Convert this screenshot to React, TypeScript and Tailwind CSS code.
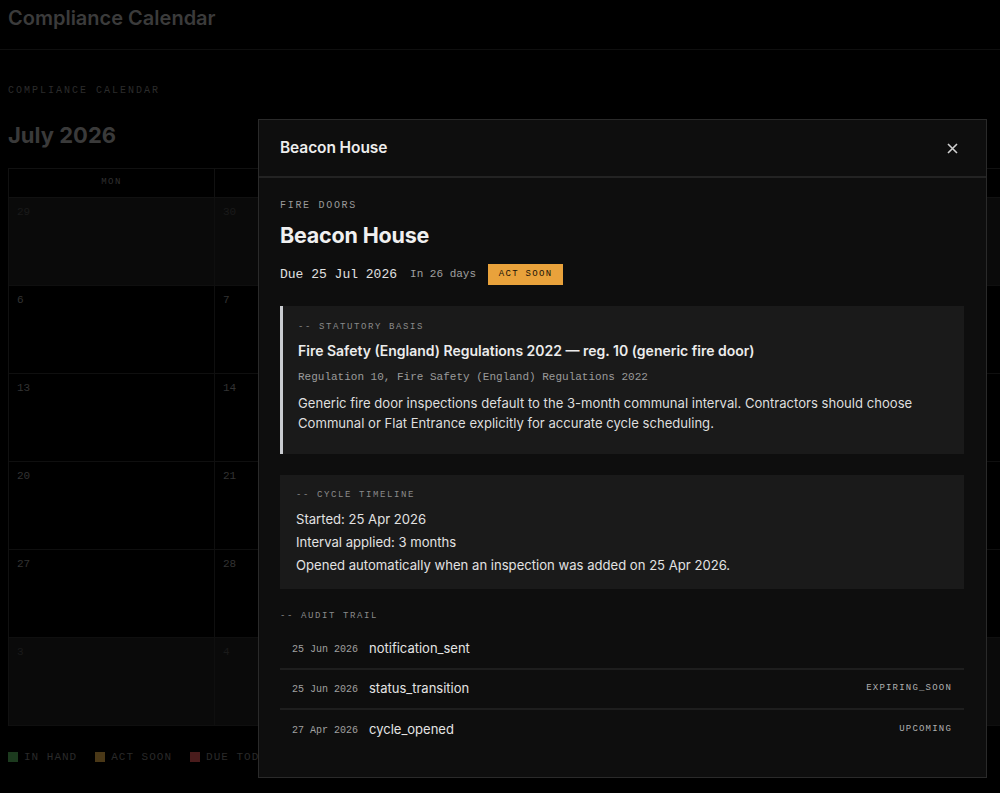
import React from "react";

const mono = "font-['Liberation_Mono','DejaVu_Sans_Mono',monospace]";
const sans = "font-['Inter','Noto_Sans',sans-serif]";

const weeks: { n: number; other: boolean }[][] = [
  [29, 30, 1, 2, 3, 4, 5].map((n, i) => ({ n, other: i < 2 })),
  [6, 7, 8, 9, 10, 11, 12].map((n) => ({ n, other: false })),
  [13, 14, 15, 16, 17, 18, 19].map((n) => ({ n, other: false })),
  [20, 21, 22, 23, 24, 25, 26].map((n) => ({ n, other: false })),
  [27, 28, 29, 30, 31, 1, 2].map((n, i) => ({ n, other: i > 4 })),
  [3, 4, 5, 6, 7, 8, 9].map((n) => ({ n, other: true })),
];

const days = ["MON", "TUE", "WED", "THU", "FRI", "SAT", "SUN"];

function Background() {
  return (
    <div className="min-h-[793px] w-[1000px] overflow-hidden bg-black">
      <div className="h-[50px] border-b border-[#0f0f0f] px-2 flex items-center">
        <div className={`${sans} text-[20px] font-semibold text-[#3b3b3b] -mt-[14px]`}>
          Compliance Calendar
        </div>
      </div>
      <div className="px-2 pt-[33px]">
        <div className={`${mono} text-[10px] tracking-[2px] text-[#2c2c2c]`}>COMPLIANCE CALENDAR</div>
        <div className={`${sans} mt-[22px] text-[22px] font-bold text-[#3a3a3a] leading-[30px]`}>July 2026</div>
        <div className="mt-[18px] w-[1442px] border-t border-l border-[#111111]">
          <div className="grid grid-cols-[repeat(7,206px)]">
            {days.map((d) => (
              <div
                key={d}
                className={`${mono} h-[29px] flex items-center justify-center border-r border-b border-[#111111] text-[9px] tracking-[1.5px] text-[#303030]`}
              >
                {d}
              </div>
            ))}
          </div>
          {weeks.map((w, wi) => (
            <div
              key={wi}
              className={`grid grid-cols-[repeat(7,206px)] ${wi === 0 || wi === 5 ? "bg-[#0a0a0a]" : "bg-black"}`}
            >
              {w.map((c, ci) => (
                <div
                  key={ci}
                  className={`${mono} h-[88px] border-r border-b border-[#0f0f0f] px-2 pt-[6px] text-[11px] ${c.other ? "text-[#1a1a1a]" : "text-[#333333]"}`}
                >
                  {c.n}
                </div>
              ))}
            </div>
          ))}
        </div>
        <div className={`${mono} mt-[23px] flex items-center gap-[18px] text-[11px] tracking-[1px] text-[#2a2a2a]`}>
          <div className="flex items-center gap-[6px]">
            <span className="h-[10px] w-[10px] bg-[#1c3a1e]" />
            IN HAND
          </div>
          <div className="flex items-center gap-[6px]">
            <span className="h-[10px] w-[10px] bg-[#4a3817]" />
            ACT SOON
          </div>
          <div className="flex items-center gap-[6px]">
            <span className="h-[10px] w-[10px] bg-[#4a1c1c]" />
            DUE TODAY
          </div>
          <div className="flex items-center gap-[6px]">
            <span className="h-[10px] w-[10px] bg-[#3a1010]" />
            OVERDUE
          </div>
        </div>
      </div>
    </div>
  );
}

function Modal() {
  const audit = [
    { d: "25 Jun 2026", e: "notification_sent", t: "" },
    { d: "25 Jun 2026", e: "status_transition", t: "EXPIRING_SOON" },
    { d: "27 Apr 2026", e: "cycle_opened", t: "UPCOMING" },
  ];
  return (
    <div className="absolute left-[258px] top-[119px] w-[729px] h-[659px] border border-[#2a2a2a] bg-[#0e0e0e] flex flex-col">
      <div className="h-[58px] shrink-0 border-b-2 border-[#232323] flex items-center justify-between pl-[21px] pr-[28px]">
        <div className={`${sans} text-[15.5px] font-semibold text-[#ededed] tracking-[-0.1px]`}>Beacon House</div>
        <svg width="11" height="11" viewBox="0 0 11 11" className="text-[#d0d0d0]">
          <path d="M1 1 L10 10 M10 1 L1 10" stroke="currentColor" strokeWidth="1.6" />
        </svg>
      </div>
      <div className="px-[21px] pt-[22px] pr-[22px]">
        <div className={`${mono} text-[10px] tracking-[1.7px] text-[#9a9a9a] leading-[12px]`}>FIRE DOORS</div>
        <div className={`${sans} mt-[10px] text-[21.5px] font-bold text-[#f0f0f0] leading-[26px] tracking-[-0.2px]`}>
          Beacon House
        </div>
        <div className="mt-[16px] flex items-center">
          <span className={`${mono} text-[13px] text-[#e0e0e0]`}>Due 25 Jul 2026</span>
          <span className={`${mono} ml-[13px] text-[11px] text-[#a0a0a0]`}>In 26 days</span>
          <span
            className={`${mono} ml-[12px] h-[21px] w-[75px] flex items-center justify-center bg-[#e9a23b] text-[9px] tracking-[1.3px] text-[#1a1208]`}
          >
            ACT SOON
          </span>
        </div>

        <div className="mt-[21px] bg-[#1a1a1a] border-l-[3px] border-[#c9ccd0] pl-[15px] pr-4 pt-[15px] pb-[21px]">
          <div className={`${mono} text-[9px] tracking-[1.6px] text-[#8a8a8a] leading-[12px]`}>-- STATUTORY BASIS</div>
          <div className={`${sans} mt-[9px] text-[14px] font-semibold text-[#ececec] leading-[18px]`}>
            Fire Safety (England) Regulations 2022 — reg. 10 (generic fire door)
          </div>
          <div className={`${mono} mt-[10px] text-[11px] text-[#9a9a9a] leading-[14px]`}>
            Regulation 10, Fire Safety (England) Regulations 2022
          </div>
          <div className={`${sans} mt-[9px] text-[13.1px] text-[#dedede] leading-[20px]`}>
            Generic fire door inspections default to the 3-month communal interval. Contractors should choose
            Communal or Flat Entrance explicitly for accurate cycle scheduling.
          </div>
        </div>

        <div className="mt-[21px] bg-[#1a1a1a] px-[16px] pt-[14px] pb-[12px]">
          <div className={`${mono} text-[9px] tracking-[1.6px] text-[#8a8a8a] leading-[12px]`}>-- CYCLE TIMELINE</div>
          <div className={`${sans} mt-[7px] text-[13.1px] text-[#e2e2e2] leading-[23px]`}>
            <div>Started: 25 Apr 2026</div>
            <div>Interval applied: 3 months</div>
            <div>Opened automatically when an inspection was added on 25 Apr 2026.</div>
          </div>
        </div>

        <div className={`${mono} mt-[21px] text-[9px] tracking-[1.6px] text-[#8a8a8a] leading-[12px]`}>-- AUDIT TRAIL</div>
        <div className="mt-[8px]">
          {audit.map((a, i) => (
            <div
              key={i}
              className={`h-[40px] flex items-center px-[12px] ${i < audit.length - 1 ? "border-b-2 border-[#1e1e1e]" : ""}`}
            >
              <span className={`${mono} text-[10px] text-[#a0a0a0] w-[77px]`}>{a.d}</span>
              <span className={`${sans} text-[13px] text-[#e4e4e4]`}>{a.e}</span>
              <span className={`${mono} ml-auto text-[9px] tracking-[1.2px] text-[#b0b0b0]`}>{a.t}</span>
            </div>
          ))}
        </div>
      </div>
    </div>
  );
}

export default function App() {
  return (
    <div className="relative w-[1000px] h-[793px] overflow-hidden bg-black">
      <Background />
      <Modal />
    </div>
  );
}
